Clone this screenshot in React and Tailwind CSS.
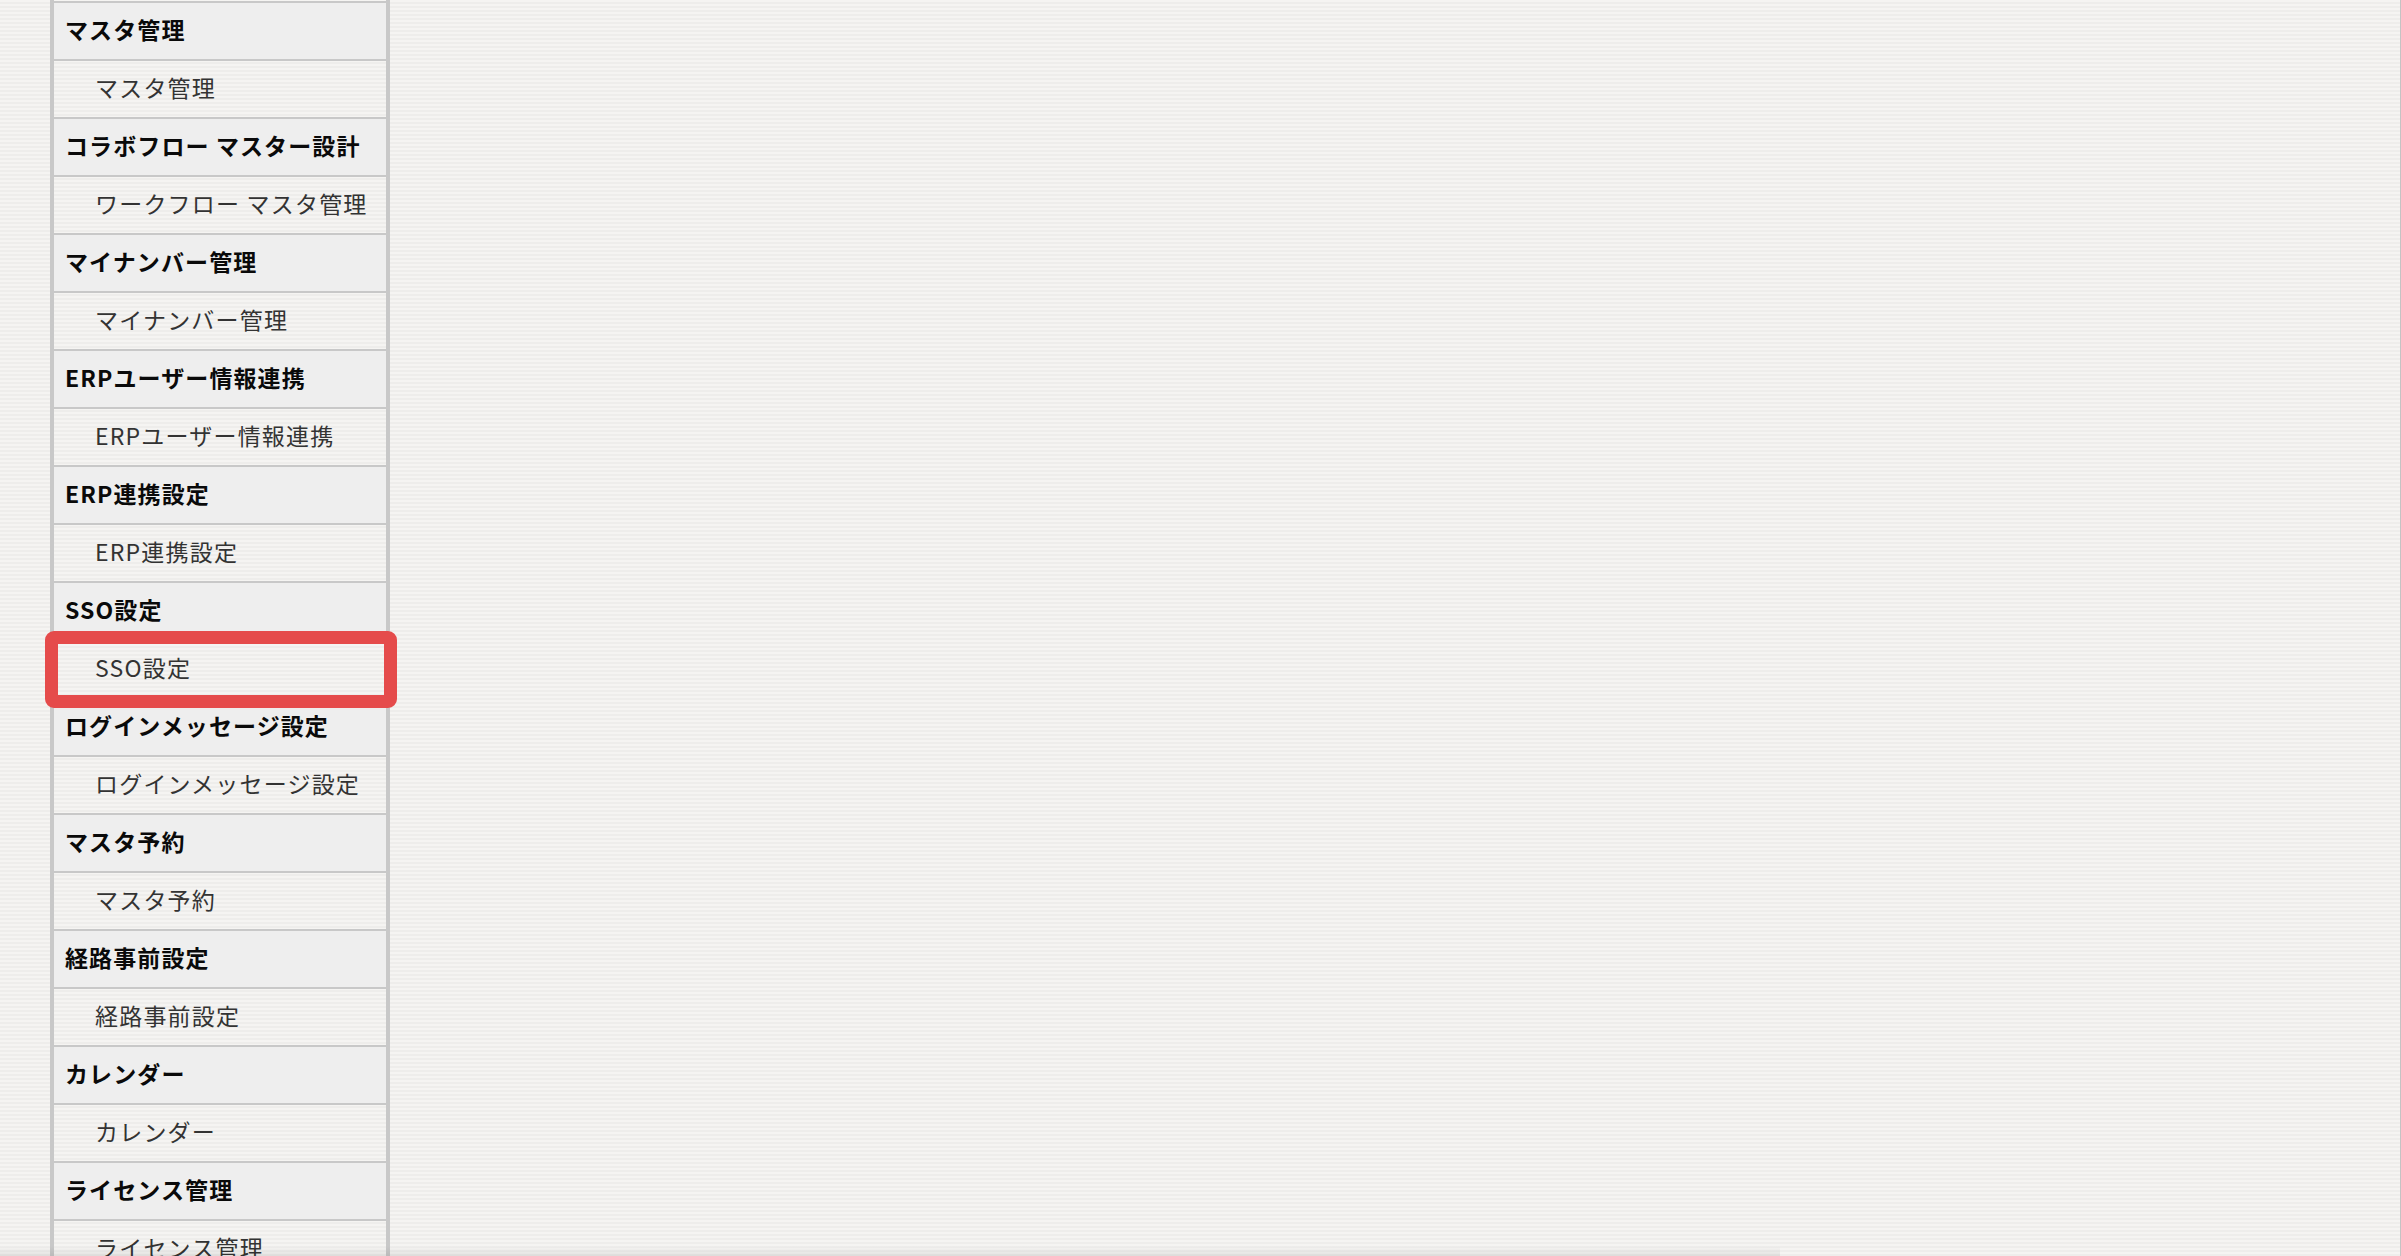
const groups = [
  ["マスタ管理", "マスタ管理"],
  ["コラボフロー マスター設計", "ワークフロー マスタ管理"],
  ["マイナンバー管理", "マイナンバー管理"],
  ["ERPユーザー情報連携", "ERPユーザー情報連携"],
  ["ERP連携設定", "ERP連携設定"],
  ["SSO設定", "SSO設定"],
  ["ログインメッセージ設定", "ログインメッセージ設定"],
  ["マスタ予約", "マスタ予約"],
  ["経路事前設定", "経路事前設定"],
  ["カレンダー", "カレンダー"],
  ["ライセンス管理", "ライセンス管理"],
];

export default function App() {
  return (
    <div className="relative h-[1256px] w-full overflow-hidden border-r border-[#c4c4c4] bg-[repeating-linear-gradient(to_bottom,#f5f4f2_0px,#f5f4f2_2px,#eeedeb_2px,#eeedeb_4px)] font-['Noto_Sans_CJK_JP','Noto_Sans',sans-serif]">
      <div className="relative ml-[50px] w-[340px] border-x-4 border-[#c8c8c8] pt-[1px]">
        {groups.map(([h, item], i) => (
          <div key={i}>
            <div className="flex h-[58px] items-center border-t-2 border-[#c8c8c8] bg-[#eeeeee] pb-[3px] pl-[11px] text-[23px] font-bold tracking-[1.1px] text-[#0a0a0a]">
              {h}
            </div>
            <div className="flex h-[58px] items-center border-t-2 border-[#c8c8c8] pb-[3px] pl-[41px] text-[23px] tracking-[1.2px] text-[#333]">
              {item}
            </div>
          </div>
        ))}
        <div className="absolute left-[-9px] top-[631px] h-[77px] w-[352px] rounded-[9px] border-[13px] border-[#e54b4b]" />
      </div>
      <div className="absolute bottom-0 left-0 h-[10px] w-[1780px] bg-[linear-gradient(to_bottom,rgba(0,0,0,0),rgba(0,0,0,0.07))]" />
    </div>
  );
}
